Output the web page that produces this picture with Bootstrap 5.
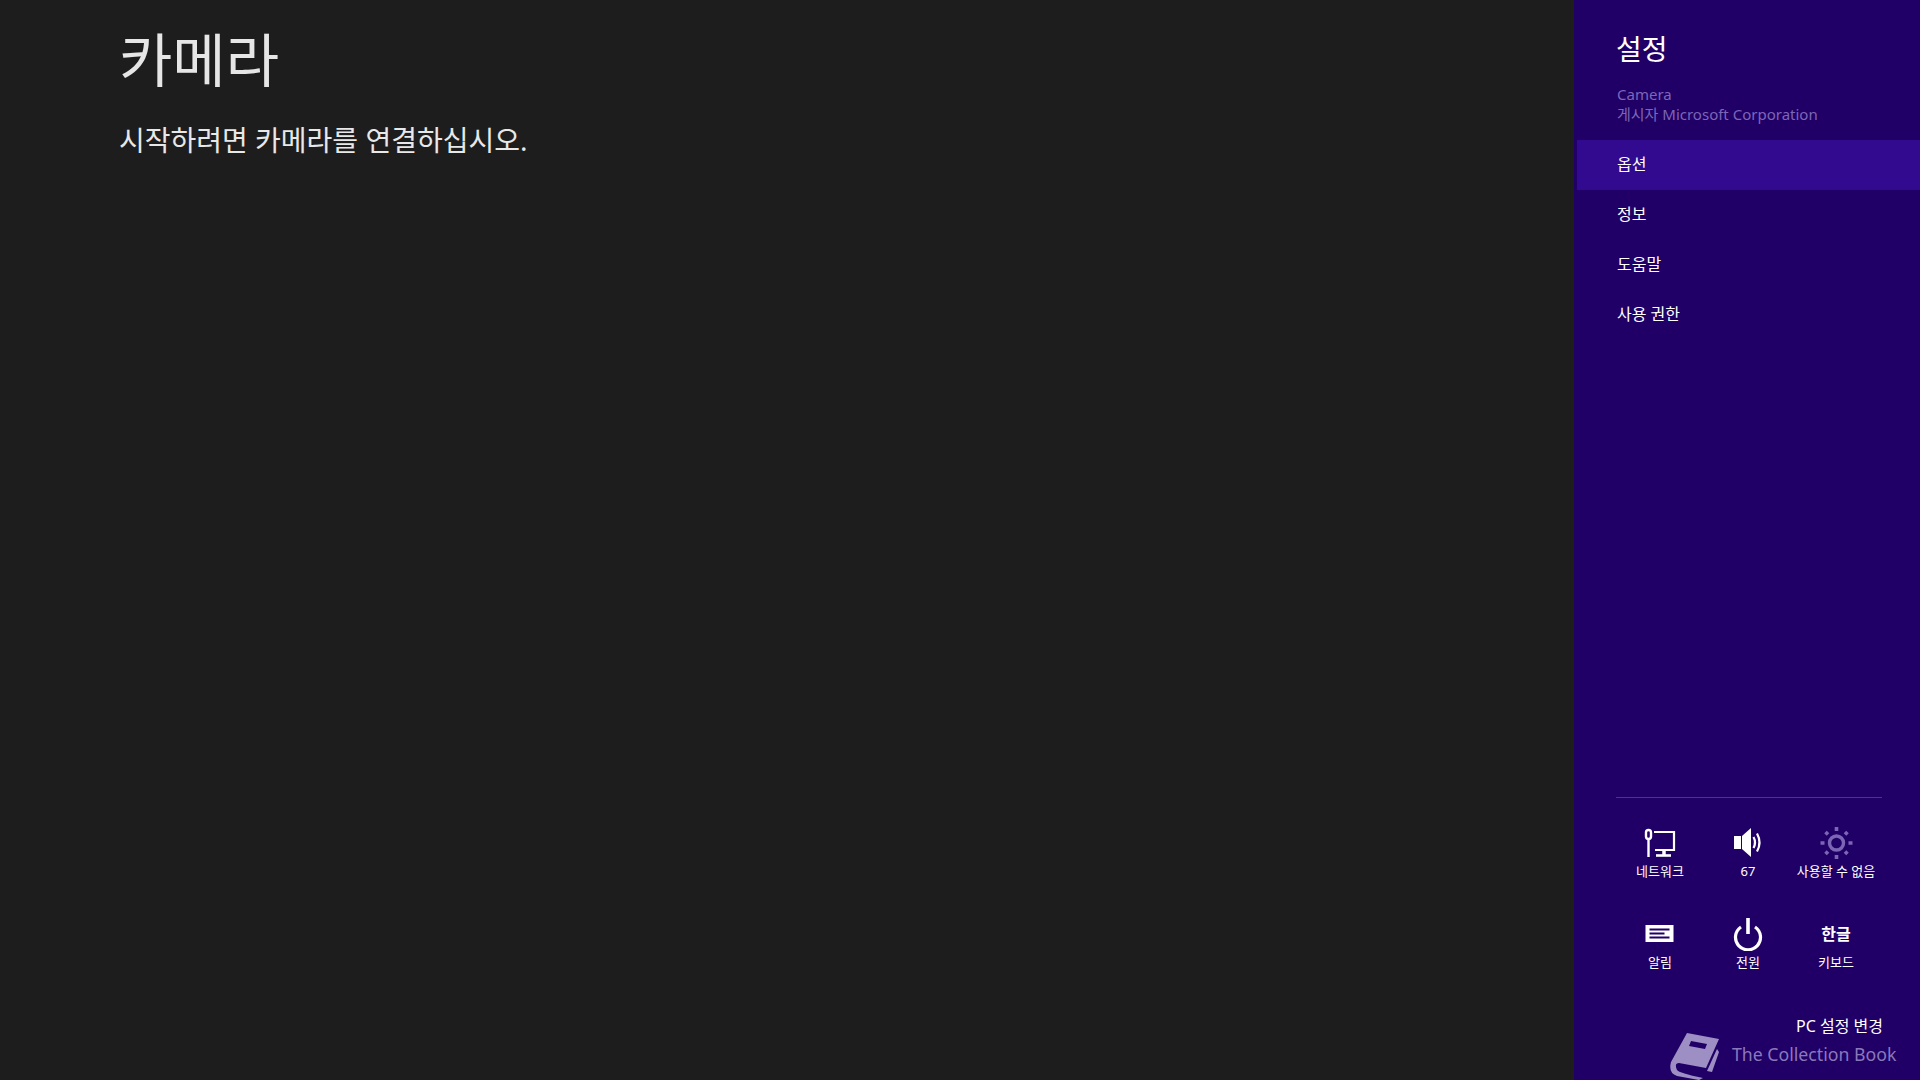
<!DOCTYPE html>
<html lang="ko">
<head>
    <meta charset="UTF-8">
    <meta name="viewport" content="width=device-width, initial-scale=1.0">
    <title>카메라</title>
    <link href="https://cdn.jsdelivr.net/npm/bootstrap@5.3.0/dist/css/bootstrap.min.css" rel="stylesheet">
    <style>
        body {
            background-color: #1d1d1d;
            font-family: "Noto Sans", "Noto Sans CJK KR", sans-serif;
            height: 100vh;
            overflow: hidden;
        }
        .app-main {
            padding: 23px 0 0 119px;
            color: #e6e6e6;
        }
        .app-title {
            font-size: 58px;
            font-weight: 400;
            line-height: 74px;
            margin: 0 0 22px;
        }
        .app-msg {
            font-size: 28px;
            font-weight: 400;
            line-height: 42px;
            margin: 0;
            color: #e8e8e8;
        }
        .charm {
            width: 346px;
            background-color: #200066;
            color: #fff;
            position: relative;
        }
        .charm-head {
            padding: 31px 0 0 42px;
            height: 140px;
        }
        .charm-title {
            font-size: 28px;
            font-weight: 400;
            line-height: 36px;
            margin: 0 0 17px;
        }
        .charm-sub {
            font-size: 15px;
            line-height: 20px;
            color: #7c66b8;
            padding-left: 1px;
        }
        .charm-menu {
            margin-left: 3px;
            --bs-list-group-bg: transparent;
            --bs-list-group-color: #fff;
            --bs-list-group-border-width: 0;
            --bs-list-group-border-radius: 0;
            --bs-list-group-item-padding-x: 40px;
            --bs-list-group-item-padding-y: 0;
            --bs-list-group-active-bg: #320a8f;
            --bs-list-group-active-color: #fff;
        }
        .charm-menu .list-group-item {
            font-size: 16px;
            line-height: 48px;
            height: 50px;
        }
        .charm-rule {
            margin: 0 38px 0 42px;
            border-top: 1px solid #4a30a0;
        }
        .quick-grid {
            display: grid;
            grid-template-columns: repeat(3, 88px);
            grid-auto-rows: 91px;
            padding: 28px 0 0 42px;
        }
        .quick-item {
            text-align: center;
            font-size: 13px;
            line-height: 17px;
        }
        .quick-icon {
            height: 34px;
            margin-bottom: 3px;
        }
        .quick-icon svg {
            display: block;
            margin: 0 auto;
        }
        .quick-hangul {
            font-size: 16px;
            font-weight: 700;
            line-height: 34px;
        }
        .charm-foot {
            font-size: 16px;
            line-height: 20px;
            text-align: right;
            padding: 0 37px 44px 0;
            margin-top: 8px;
        }
        .watermark {
            position: absolute;
            left: 95px;
            bottom: 0;
            display: flex;
            align-items: flex-start;
            gap: 11px;
            color: #8a78bd;
            font-size: 17.7px;
            line-height: 26px;
            white-space: nowrap;
        }
        .watermark svg {
            display: block;
        }
        .watermark span {
            padding-top: 9px;
        }
    </style>
</head>
<body class="d-flex">
    <main class="app-main flex-grow-1">
        <h1 class="app-title">카메라</h1>
        <p class="app-msg">시작하려면 카메라를 연결하십시오.</p>
    </main>

    <aside class="charm d-flex flex-column">
        <div class="charm-head">
            <h2 class="charm-title">설정</h2>
            <div class="charm-sub">Camera<br>게시자 Microsoft Corporation</div>
        </div>

        <div class="list-group list-group-flush charm-menu">
            <a href="#" class="list-group-item active">옵션</a>
            <a href="#" class="list-group-item">정보</a>
            <a href="#" class="list-group-item">도움말</a>
            <a href="#" class="list-group-item">사용 권한</a>
        </div>

        <div class="mt-auto">
            <div class="charm-rule"></div>
            <div class="quick-grid">
                <div class="quick-item">
                    <div class="quick-icon">
                        <svg width="34" height="34" viewBox="0 0 34 34" fill="none" stroke="#fff">
                            <rect x="3" y="4" width="5" height="9" rx="2.5" stroke-width="2.4"/>
                            <path d="M5.500 13V31" stroke-width="2.4"/>
                            <path d="M11 6H31V24H12" stroke-width="2.2"/>
                            <path d="M21 24V29" stroke-width="3.5"/>
                            <path d="M13 29.500H28" stroke-width="2.6"/>
                        </svg>
                    </div>
                    네트워크
                </div>
                <div class="quick-item">
                    <div class="quick-icon">
                        <svg width="34" height="34" viewBox="0 0 34 34" fill="#fff" stroke="none">
                            <rect x="3" y="10" width="7" height="13"/>
                            <path d="M11 10L20 2V31L11 23Z"/>
                            <path d="M22.500 11Q25.500 16.500 22.500 22" fill="none" stroke="#fff" stroke-width="2.2"/>
                            <path d="M26 7.500Q31 16.500 26 25.500" fill="none" stroke="#fff" stroke-width="2.2"/>
                        </svg>
                    </div>
                    67
                </div>
                <div class="quick-item">
                    <div class="quick-icon">
                        <svg width="34" height="34" viewBox="0 0 34 34" fill="none" stroke="#7a66b5">
                            <circle cx="17.500" cy="17" r="7" stroke-width="3.4"/>
                            <path d="M17.500 1V5M17.500 29V33M1.500 17H5.500M29.500 17H33.500M6.500 6L9 8.500M26 25.500L28.500 28M6.500 28L9 25.500M26 8.500L28.500 6" stroke-width="3.6"/>
                        </svg>
                    </div>
                    사용할 수 없음
                </div>
                <div class="quick-item">
                    <div class="quick-icon">
                        <svg width="34" height="34" viewBox="0 0 34 34">
                            <rect x="2.500" y="8" width="28" height="17" fill="#fff"/>
                            <path d="M6.500 12.500H26.500M6.500 16.500H21.500M6.500 20.500H26.500" stroke="#200066" stroke-width="1.800"/>
                        </svg>
                    </div>
                    알림
                </div>
                <div class="quick-item">
                    <div class="quick-icon">
                        <svg width="34" height="34" viewBox="0 0 34 34" fill="none" stroke="#fff">
                            <path d="M10 10A12.500 12.500 0 1 0 24 10" stroke-width="3.200"/>
                            <path d="M17 1V17" stroke-width="3.600"/>
                        </svg>
                    </div>
                    전원
                </div>
                <div class="quick-item">
                    <div class="quick-icon quick-hangul">한글</div>
                    키보드
                </div>
            </div>
            <div class="charm-foot">PC 설정 변경</div>
        </div>

        <div class="watermark">
            <svg width="52" height="48" viewBox="0 0 52 48">
                <path d="M18 1L50 7L37 36L10 31Q5 31 8 38Q10 41 34 46L30 48L8 44Q-1 41 2 30Z" fill="#9d8fc4"/>
                <path d="M38 39L48 17L50 20L43 40Z" fill="#9d8fc4"/>
                <path d="M22 9L38 12L36 17L20 14Z" fill="#200066"/>
            </svg>
            <span>The Collection Book</span>
        </div>
    </aside>
</body>
</html>
